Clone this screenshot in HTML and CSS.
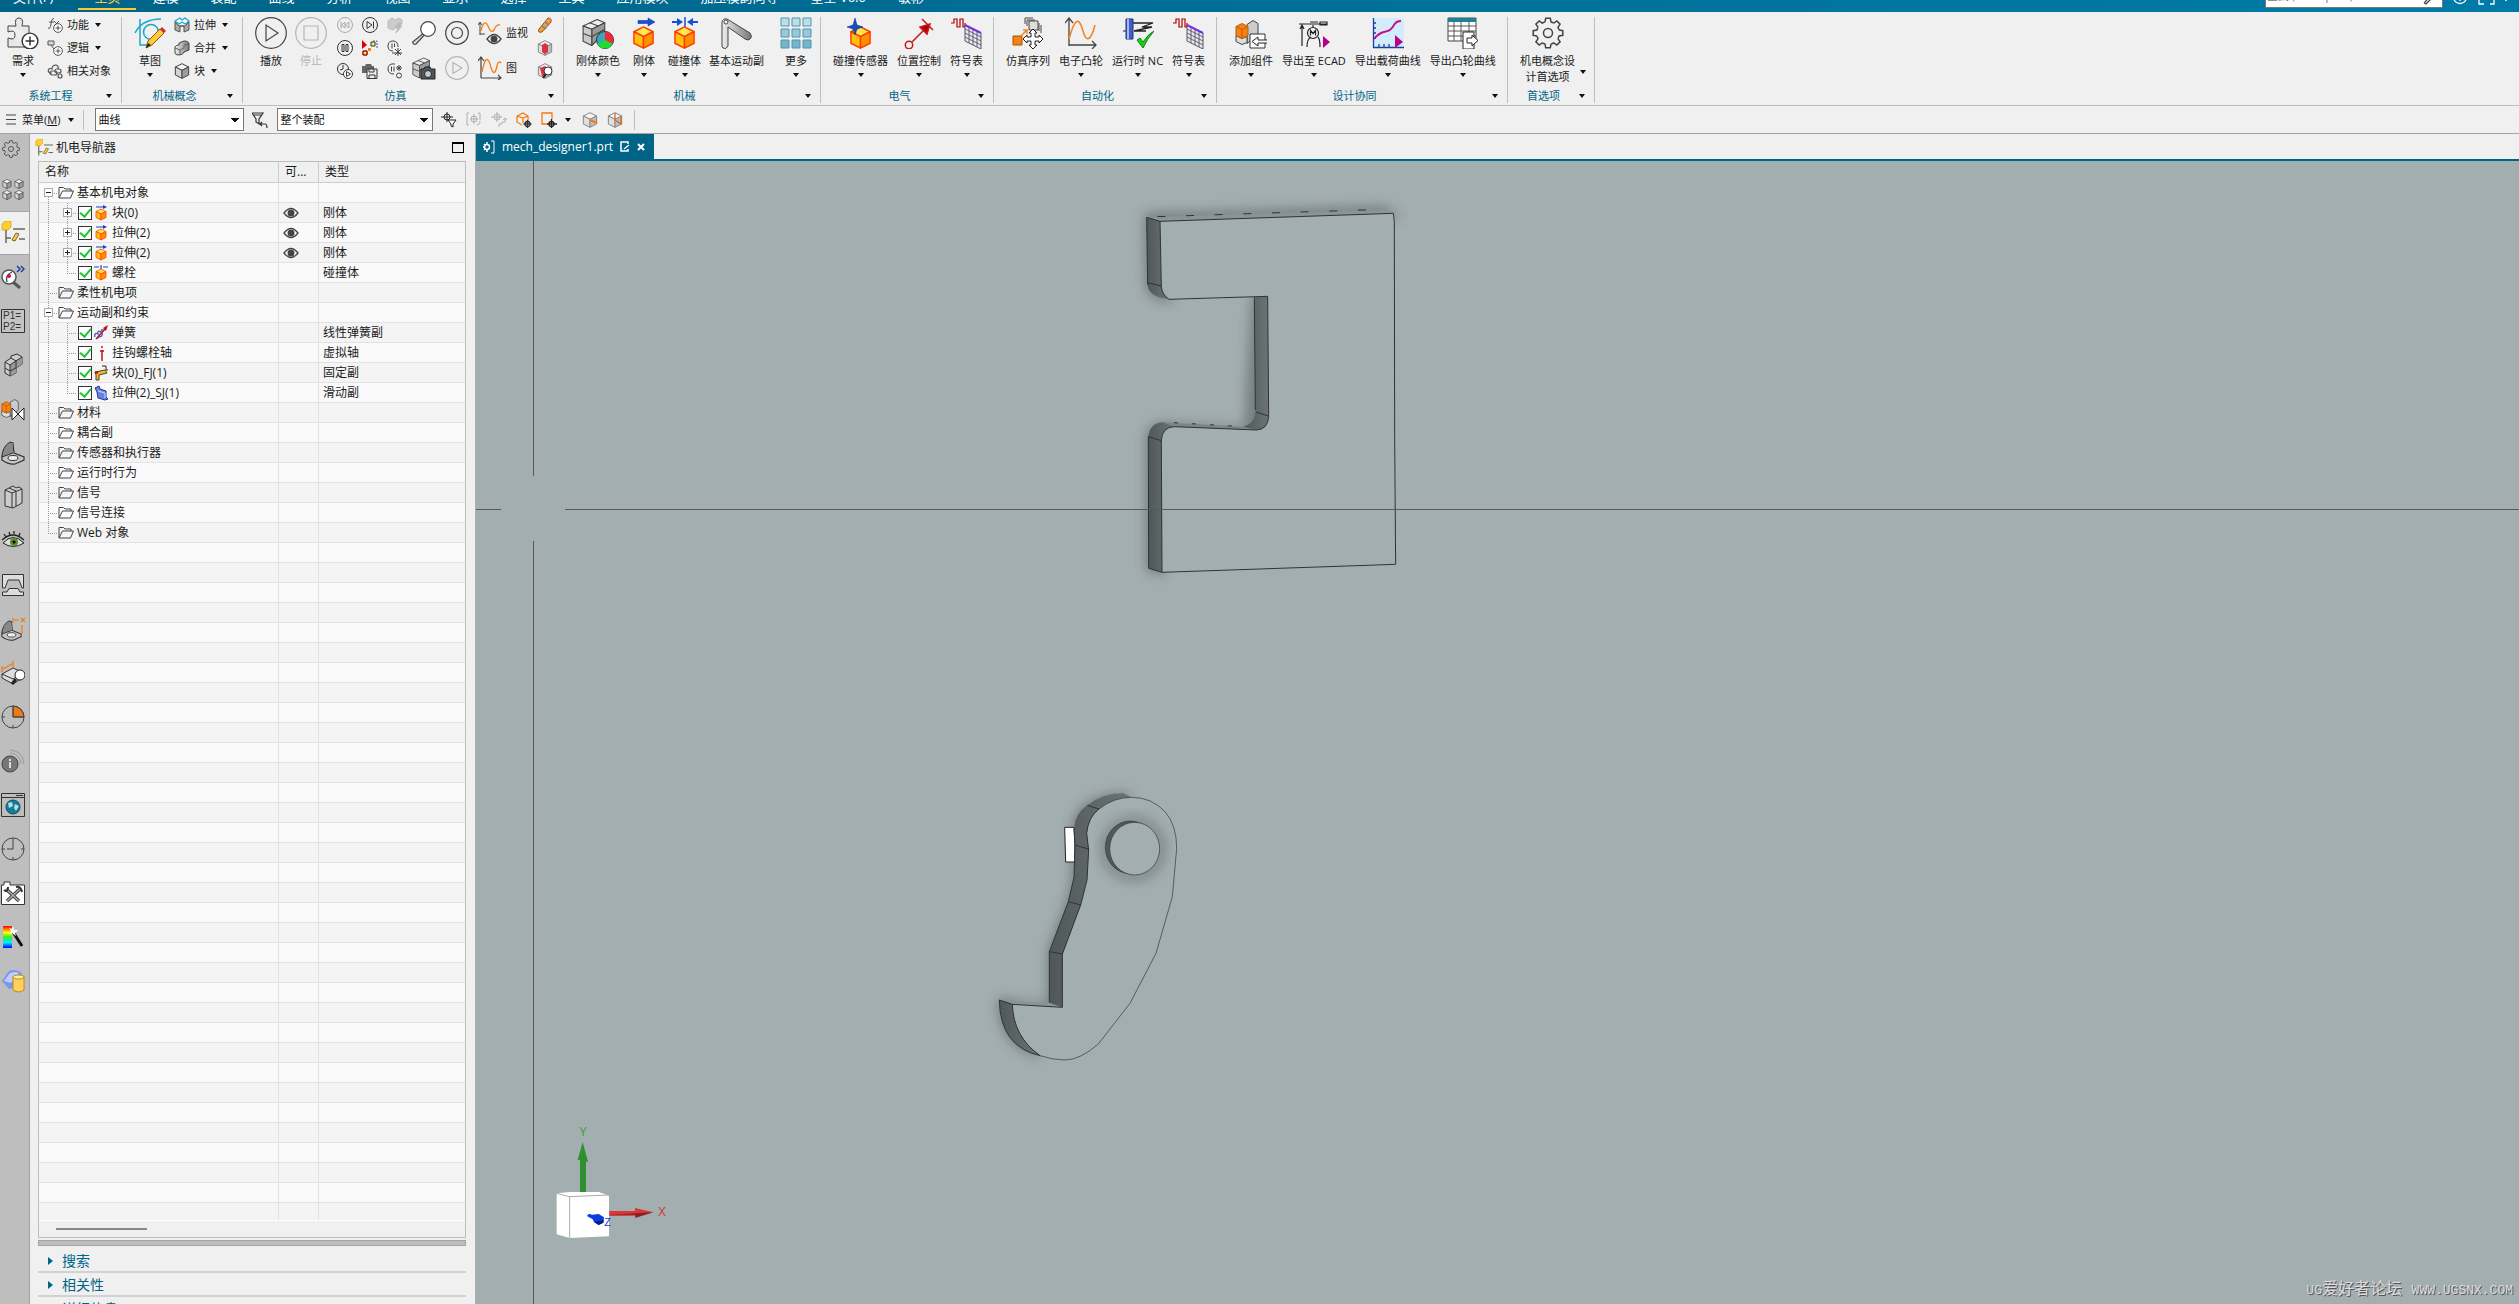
FILE: index.html
```
<!DOCTYPE html>
<html lang="zh-CN">
<head>
  <meta charset="UTF-8">
  <meta name="viewport" content="width=device-width, initial-scale=1.0">
  <title>mech_designer1.prt</title>
  <link rel="stylesheet" href="styles.css">
</head>
<body>
  <!-- shared icons -->
  <svg class="defs" width="0" height="0">
    <defs>
      <linearGradient id="metal" x1="0" x2="1"><stop offset="0" stop-color="#eee"/><stop offset="1" stop-color="#777"/></linearGradient>
      <linearGradient id="wall" x1="0" x2="1"><stop offset="0" stop-color="#4f5759"/><stop offset="1" stop-color="#6c7476"/></linearGradient>
      <linearGradient id="rainbow" x1="0" x2="0" y1="0" y2="1"><stop offset="0" stop-color="#f00"/><stop offset=".3" stop-color="#ff0"/><stop offset=".5" stop-color="#3e2"/><stop offset=".75" stop-color="#0ef"/><stop offset="1" stop-color="#00f"/></linearGradient>
      <filter id="soft" x="-20%" y="-20%" width="140%" height="140%"><feGaussianBlur stdDeviation="18"/></filter>
    </defs>
    <symbol id="cube-o" viewBox="0 0 24 24"><g stroke="#ff3c00" stroke-width="1.5" stroke-linejoin="round"><path d="M12 1 22 6 12 11 2 6z" fill="#ffe850"/><path d="M2 6 12 11V23L2 18z" fill="#ffc010"/><path d="M22 6 12 11V23L22 18z" fill="#ff9000"/></g></symbol>
    <symbol id="cube-g" viewBox="0 0 24 24"><g stroke="#444" stroke-width="1.5" stroke-linejoin="round"><path d="M12 1 22 6 12 11 2 6z" fill="#f4f4f4"/><path d="M2 6 12 11V23L2 18z" fill="#d4d4d4"/><path d="M22 6 12 11V23L22 18z" fill="#9c9c9c"/></g></symbol>
    <symbol id="stack" viewBox="0 0 24 24"><g stroke="#444" stroke-linejoin="round"><path d="M1 6 14 0 21 3 9 9z" fill="#eee"/><path d="M9 9 21 3V12L9 24z" fill="#999"/><path d="M1 6 9 9V24L1 20z" fill="#ccc"/><path d="M1 13 9 16 21 9M7 3 15 6" fill="none"/></g></symbol>
    <symbol id="folder" viewBox="0 0 16 13"><path d="M1 12V1.500H5.500L7 3H13V5M1 12 4.500 5H15.500L12.500 12z" fill="none" stroke="#444"/></symbol>
    <symbol id="eye" viewBox="0 0 16 12"><path d="M1 6Q8-3 15 6Q8 15 1 6z" fill="#fff" stroke="#444" stroke-width="1.300"/><circle cx="8" cy="6" r="3.500" fill="#444"/></symbol>
    <symbol id="gear" viewBox="0 0 32 32"><g fill="none" stroke="#444" stroke-width="1.500"><g id="t1"><path id="t0" d="M13 4.900 13.700 1.200H18.300L19 4.900 21.800 6"/><use href="#t0" transform="rotate(45 16 16)"/><use href="#t0" transform="rotate(90 16 16)"/><use href="#t0" transform="rotate(135 16 16)"/></g><use href="#t1" transform="rotate(180 16 16)"/><circle cx="16" cy="16" r="4.500"/></g></symbol>
    <symbol id="plus" viewBox="0 0 16 16"><circle cx="8" cy="8" r="7" fill="#fff" stroke="#333" stroke-width="1.300"/><path d="M8 4V12M4 8H12" stroke="#333" stroke-width="1.300"/></symbol>
    <symbol id="rigid" viewBox="0 0 14 16"><path d="M2 2H10" stroke="#1840c8"/><path d="M9 0 13 2 9 4z" fill="#1840c8"/><use href="#cube-o" x="1" y="3" width="12" height="13"/></symbol>
    <symbol id="navicon" viewBox="0 0 24 24"><path d="M5 8V22M5 17H10M12 8H24M18 18H24" fill="none" stroke="#666" stroke-width="1.500"/><path d="M1 3 4 0H10V6L7 9H1z" fill="#ffcf2e" stroke="#c89000" stroke-width=".600"/><path d="M11 19 15 12 18 13 14 20z" fill="#f5c860" stroke="#8a6410"/></symbol>
    <symbol id="symtab" viewBox="0 0 32 32"><path d="M0 6H3V2H6V10H9V2H12V10H14V6" fill="none" stroke="#b00000" stroke-width="1.200"/><path d="M14 8 30 16V32L14 24z" fill="#e8e8ee" stroke="#556"/><path d="M14 12 30 20M14 16 30 24M14 20 30 28M18 10V26M22 12V28M26 14V30" stroke="#556" stroke-width=".900"/><path d="M14 8 30 16" stroke="#7a30e0" stroke-width="2"/></symbol>
    <symbol id="bracket" viewBox="0 0 24 24"><path d="M1 16Q2 6 12 2L13 12 23 16V19L14 23Q8 24 1 19z" fill="#c4c4c4" stroke="#333" stroke-width="1.200"/><path d="M12 2 9 1Q1 6 1 16L12 12" fill="#888" stroke="#333"/><ellipse cx="12" cy="17" rx="5" ry="2.500" fill="#eee" stroke="#333"/></symbol>
    <symbol id="comp" viewBox="0 0 24 24"><path d="M12 4 18 0 23 3V14L12 23z" fill="#ccc" stroke="#444"/><path d="M1 15 7 18 12 16V22L7 24 1 21z" fill="#ddd" stroke="#444"/><path d="M1 6 7 3 13 6V15L7 18 1 15z" fill="#f58216" stroke="#c05600"/><path d="M1 6 7 9 13 6M7 9V18" fill="none" stroke="#c05600"/></symbol>
  </svg>

  <div class="app">
    <header class="menubar">
      <nav class="menus">
        <a href="#" class="file">文件(F)</a>
        <a href="#" class="active">主页</a>
        <a href="#">建模</a>
        <a href="#">装配</a>
        <a href="#">曲线</a>
        <a href="#">分析</a>
        <a href="#">视图</a>
        <a href="#">显示</a>
        <a href="#">选择</a>
        <a href="#">工具</a>
        <a href="#">应用模块</a>
        <a href="#">加压模韵向导</a>
        <a href="#">星空 V6.0</a>
        <a href="#">敏彬</a>
      </nav>
      <div class="finder">
        <input type="text" aria-label="查找命令" placeholder="查找 (Ctrl+Space)">
        <svg width="76" height="12" viewBox="0 0 76 12" fill="none" stroke="#fff" stroke-width="1.300"><path d="M-19 3 -16 0M-19 3 -17 4 -12-1" stroke="#444"/><circle cx="17" cy="-3" r="6.500"/><path d="M17-4V1M36 0V4H41M47 4H51V0"/><path d="M62 0H64"/></svg>
      </div>
    </header>

    <div class="ribbon">
      <section class="group g-system">
        <div class="tools">
          <button class="big"><svg class="i32" viewBox="0 0 32 32"><path d="M1 9H9Q7 1 12 1Q17 1 15 9H22V16M1 9V15Q8 12 8 18Q8 24 1 21V30H18" fill="#e8e8e8" stroke="#444"/><use href="#plus" x="14" y="15" width="18" height="18"/></svg>需求<i class="arrow"></i></button>
          <div class="stack">
            <button class="small"><svg class="i16" viewBox="0 0 16 16"><path d="M1 11Q3 13 4 7Q5 0 7 2M2 5H7M7 4 12 9M12 4 7 9" fill="none" stroke="#555"/><use href="#plus" x="6" y="6" width="10" height="10"/></svg>功能<i class="arrow"></i></button>
            <button class="small"><svg class="i16" viewBox="0 0 16 16"><path d="M1 1H7V5H1zM4 5 7 9" fill="#ddd" stroke="#555"/><use href="#plus" x="6" y="6" width="10" height="10"/></svg>逻辑<i class="arrow"></i></button>
            <button class="small"><svg class="i16" viewBox="0 0 16 16" fill="none" stroke="#555" stroke-width="1.200"><path d="M5 10H3Q0 8 2 6Q3 5 5 6Q5 2 9 2Q12 3 11 6"/><rect x="3" y="8" width="7" height="4" rx="2"/><rect x="8" y="6" width="6" height="4" rx="2"/><circle cx="13" cy="13" r="2"/></svg>相关对象</button>
          </div>
        </div>
        <h2>系统工程<i class="arrow"></i></h2>
      </section>

      <section class="group g-concept">
        <div class="tools">
          <button class="big"><svg class="i32" viewBox="0 0 32 32"><g fill="none" stroke="#18a8cc" stroke-width="1.500"><path d="M6 2V28H17M1 16Q8 2 27 2"/><circle cx="17" cy="15" r="7.500"/></g><path d="M12 31 14 24 26 12 30 16 18 28z" fill="#ffc83c" stroke="#8a5a00"/><path d="M26 12 28 10 32 14 30 16z" fill="#d03030"/><path d="M12 31 14 26 17 28z" fill="#222"/></svg>草图<i class="arrow"></i></button>
          <div class="stack">
            <button class="small"><svg class="i16" viewBox="0 0 16 16"><path d="M1 5V13L6 15V9H10V15L15 13V5L11 9H5z" fill="#aaa" stroke="#555"/><path d="M1 4 6 1 8 3 11 1 15 4 11 7 8 5 5 7z" fill="#fff" stroke="#18a8cc" stroke-width="1.300"/></svg>拉伸<i class="arrow"></i></button>
            <button class="small"><svg class="i16" viewBox="0 0 16 16"><path d="M1 7Q2 5 5 5V3L10 1Q15 1 15 4V10L10 12Q9 15 5 15Q1 15 1 13z" fill="url(#metal)" stroke="#444"/><path d="M1 8 6 10 10 8 10 5 15 4M6 10V15" fill="none" stroke="#666"/></svg>合并<i class="arrow"></i></button>
            <button class="small"><svg class="i16"><use href="#cube-g"/></svg>块<i class="arrow"></i></button>
          </div>
        </div>
        <h2>机械概念<i class="arrow"></i></h2>
      </section>

      <section class="group g-sim">
        <div class="tools">
          <div class="pair">
            <button class="big"><svg class="i32" viewBox="0 0 32 32" fill="none" stroke="#444" stroke-width="1.200"><circle cx="16" cy="16" r="15.300"/><path d="M11 8V24L23 16z"/></svg>播放</button>
            <button class="big off" disabled><svg class="i32" viewBox="0 0 32 32" fill="none" stroke="#b4b4b4" stroke-width="1.200"><circle cx="16" cy="16" r="15.300"/><path d="M9 9H23V23H9z"/></svg>停止</button>
          </div>
          <div class="stack">
            <button class="icon" aria-label="回到起点"><svg class="i16" viewBox="0 0 16 16" fill="none" stroke="#aaa"><circle cx="8" cy="8" r="7.500"/><path d="M4 4.500V11.500M8 5V11L4.500 8zM12 5V11L8.500 8z"/></svg></button>
            <button class="icon" aria-label="暂停"><svg class="i16" viewBox="0 0 16 16" fill="none" stroke="#333"><circle cx="8" cy="8" r="7.500"/><path d="M5 4.500H7V11.500H5zM9 4.500H11V11.500H9z"/></svg></button>
            <button class="icon" aria-label="定时播放"><svg class="i16" viewBox="0 0 16 16" fill="none" stroke="#333"><circle cx="6" cy="6" r="5.500"/><path d="M6 2V6L3 7"/><circle cx="11" cy="11" r="4.500" fill="#fff"/><path d="M9.500 8.500V13.500L13.500 11z"/></svg></button>
          </div>
          <div class="stack">
            <button class="icon" aria-label="下一步"><svg class="i16" viewBox="0 0 16 16" fill="none" stroke="#333"><circle cx="8" cy="8" r="7.500"/><path d="M5 4.500V11.500L10 8zM11.500 4.500V11.500"/></svg></button>
            <button class="icon" aria-label="步进"><svg class="i16" viewBox="0 0 16 16"><path d="M0 0V9L5 5z" fill="#e00000"/><path d="M9 2H13V6H9zM1 11H5V15H1z" fill="#fff34a" stroke="#333"/><path d="M1 11H5V15H1z" fill="none" stroke="#e00000"/><path d="M6 8H9V11H6z" fill="#f58216"/><path d="M11 1H15V9" fill="none" stroke="#3060d0" stroke-dasharray="2 1"/></svg></button>
            <button class="icon" aria-label="保存快照"><svg class="i16" viewBox="0 0 16 16"><path d="M0 3H3L4 1H9L10 3H12V10H0z" fill="#666"/><path d="M5 6H15V15.500H5z" fill="#eee" stroke="#333"/><path d="M7 6V9H12V6M7 15V12H13V15" fill="none" stroke="#333"/></svg></button>
          </div>
          <div class="stack">
            <button class="icon" aria-label="快照"><svg class="i16" viewBox="0 0 16 16" fill="#ccc" stroke="#bbb"><path d="M1 4 5 1 8 3 12 1 15 3V7L11 9 6 13 1 11z"/><path d="M11 6 8 11H11L9 16L15 9H12L14 6z" fill="#bbb"/></svg></button>
            <button class="icon" aria-label="暂停条件"><svg class="i16" viewBox="0 0 16 16" fill="none" stroke="#444"><path d="M11 7Q11 1 6 1Q1 1 1 6Q1 11 6 11M5 3.500V8.500M7.500 3.500V7M5 13H15M11 8V16M8 9 14 15M14 9 8 15"/></svg></button>
            <button class="icon" aria-label="暂停设置"><svg class="i16" viewBox="0 0 16 16" fill="none" stroke="#444"><path d="M8 1Q1 0 1 6Q1 11 7 11M4.500 3.500V8.500M7 3.500V8.500M9 5H15M12 2V8M10 3 14 7M14 3 10 7"/><circle cx="12" cy="12.500" r="2.500"/></svg></button>
          </div>
          <div class="stack wide">
            <button class="icon" aria-label="检查"><svg class="i24" viewBox="0 0 24 24" fill="#fff" stroke="#444" stroke-width="1.200"><circle cx="16" cy="8" r="7.300"/><path d="M10.500 13 12 14.500 4 23Q2 24 1 22Q0 21 2 20z" fill="#ddd"/></svg></button>
            <button class="icon" aria-label="捕捉布置"><svg class="i24" viewBox="0 0 24 24"><use href="#stack" width="20" height="24"/><path d="M9 13H12L13 11H18L19 13H23V23H9z" fill="#555" stroke="#222"/><circle cx="16" cy="18" r="3.500" fill="#bcd" stroke="#222"/></svg></button>
          </div>
          <div class="stack wide">
            <button class="icon" aria-label="录制"><svg class="i24" viewBox="0 0 24 24" fill="none" stroke="#444" stroke-width="1.200"><circle cx="12" cy="12" r="11.300"/><circle cx="12" cy="12" r="5.500"/></svg></button>
            <button class="icon" aria-label="回放"><svg class="i24" viewBox="0 0 24 24" fill="none" stroke="#b4b4b4" stroke-width="1.200"><circle cx="12" cy="12" r="11.300"/><path d="M8 6.500V17.500L17 12z"/></svg></button>
          </div>
          <div class="stack wide">
            <button class="small"><svg class="i24" viewBox="0 0 24 24"><path d="M2 14V2M0 4 2 1 4 4M2 13H7" fill="none" stroke="#444"/><path d="M3 10Q6-3 10 5Q13 13 16 9Q18 3 22 4" fill="none" stroke="#f58216" stroke-width="1.300"/><use href="#eye" x="8" y="12" width="16" height="12"/></svg>监视</button>
            <button class="small"><svg class="i24" viewBox="0 0 24 24"><path d="M3 22V2M0 5 3 1 6 5M3 22H23M20 19 23 22 20 24" fill="none" stroke="#444" stroke-width="1.200"/><path d="M4 16Q8-4 12 8Q16 24 19 10Q20 4 23 7" fill="none" stroke="#f58216" stroke-width="1.400"/></svg>图</button>
          </div>
          <div class="stack">
            <button class="icon" aria-label="材料"><svg class="i16" viewBox="0 0 16 16"><path d="M2 12 11 1Q15 1 14 5L5 15Q0 16 2 12z" fill="#f0a040" stroke="#a05010"/><path d="M5 9 9 12M8 5 12 8" stroke="#888" stroke-width="2"/></svg></button>
            <button class="icon" aria-label="干涉"><svg class="i16" viewBox="0 0 16 16"><use href="#cube-g" opacity=".6"/><path d="M5 5 8 3 11 5V12L8 14 5 12z" fill="#d83440"/></svg></button>
            <button class="icon" aria-label="干涉检查"><svg class="i16" viewBox="0 0 16 16"><use href="#cube-g" opacity=".6"/><path d="M3 5 8 3 10 5 8 13H5z" fill="#d83440"/><circle cx="11" cy="8" r="4" fill="#fff" stroke="#333"/><path d="M9 11 6 15" stroke="#222" stroke-width="2"/></svg></button>
          </div>
        </div>
        <h2>仿真<i class="arrow"></i></h2>
      </section>

      <section class="group g-mech">
        <div class="tools">
          <button class="big"><svg class="i32" viewBox="0 0 32 32"><use href="#stack" width="26" height="31"/><circle cx="23" cy="23" r="8.500" fill="#35a8bc" stroke="#333"/><path d="M23 23V14.500A8.500 8.500 0 0 1 30.500 27z" fill="#f02838"/><path d="M23 23 30.500 27A8.500 8.500 0 0 1 15.500 27z" fill="#20dc30"/></svg>刚体颜色<i class="arrow"></i></button>
          <button class="big"><svg class="i32" viewBox="0 0 32 32"><path d="M10 3.500H20V1L27 5 20 9V6.500H10z" fill="#1450d8" stroke="#0a2a90" stroke-width=".500"/><use href="#cube-o" x="3" y="9" width="25" height="23"/></svg>刚体<i class="arrow"></i></button>
          <button class="big"><svg class="i32" viewBox="0 0 32 32"><path d="M3 4H8V1L14 5 8 9V6H3zM29 4H24V1L18 5 24 9V6H29z" fill="#1450d8"/><path d="M16 0V10" stroke="#1450d8" stroke-width="1.500"/><use href="#cube-o" x="3" y="9" width="25" height="23"/></svg>碰撞体<i class="arrow"></i></button>
          <button class="big"><svg class="i32" viewBox="0 0 32 32"><path d="M1 5Q2 1 6 2L29 16Q32 20 29 22Q27 24 24 22L7 10V29Q5 33 2 31Q1 30 1 28z" fill="url(#metal)" stroke="#444"/><circle cx="5" cy="5" r="2" fill="#fff" stroke="#444"/></svg>基本运动副<i class="arrow"></i></button>
          <button class="big more"><svg class="i32" viewBox="0 0 32 32" stroke="#4898b0"><path d="M1 1H9V9H1zM12 1H20V9H12zM23 1H31V9H23z" fill="#c0dce4"/><path d="M1 12H9V20H1zM12 12H20V20H12zM23 12H31V20H23z" fill="#9cc8d6"/><path d="M1 23H9V31H1zM12 23H20V31H12zM23 23H31V31H23z" fill="#78b4c8"/></svg>更多<i class="arrow"></i></button>
        </div>
        <h2>机械<i class="arrow"></i></h2>
      </section>

      <section class="group g-elec">
        <div class="tools">
          <button class="big"><svg class="i32" viewBox="0 0 32 32"><use href="#cube-o" x="3" y="9" width="25" height="23"/><path d="M10 1 12 8 18 10 12 12 10 18 8 12 2 10 8 8z" fill="#1450c0" stroke="#0a2a80" stroke-width=".500"/></svg>碰撞传感器<i class="arrow"></i></button>
          <button class="big"><svg class="i32" viewBox="0 0 32 32" fill="none" stroke="#c81818" stroke-width="1.500"><circle cx="6" cy="28" r="3.700"/><path d="M9 25 24 10M19 2 30 13"/><path d="M27 7 17 10 24 17z" fill="#b00000"/></svg>位置控制<i class="arrow"></i></button>
          <button class="big"><svg class="i32"><use href="#symtab"/></svg>符号表<i class="arrow"></i></button>
        </div>
        <h2>电气<i class="arrow"></i></h2>
      </section>

      <section class="group g-auto">
        <div class="tools">
          <button class="big"><svg class="i32" viewBox="0 0 32 32"><path d="M1 19H10V28H1z" fill="#f58216" stroke="#a85000"/><path d="M9 19 14 14M11 13H15V17" fill="none" stroke="#f58216" stroke-width="1.500"/><path d="M13 7V1H21M15 9V3H23" fill="none" stroke="#444"/><path d="M17 4H26V13H17z" fill="#ddd" stroke="#444"/><path d="M29 8V16M27 6V14" stroke="#444"/><path d="M21 12 25 16H23V20H27V18L31 22 27 26V24H23V28H25L21 32 17 28H19V24H15V26L11 22 15 18V20H19V16H17z" fill="#fff" stroke="#222"/></svg>仿真序列</button>
          <button class="big"><svg class="i32" viewBox="0 0 32 32"><path d="M4 29V2M0 6 4 1 8 6M4 28H31M27 24 31 28 27 32" fill="none" stroke="#444" stroke-width="1.300"/><path d="M4 22C10 0 14 0 18 14C21 26 26 24 30 8" fill="none" stroke="#f58216" stroke-width="1.500"/></svg>电子凸轮<i class="arrow"></i></button>
          <button class="big"><svg class="i32" viewBox="0 0 32 32"><path d="M5 6H31L20 10H30L12 14H24" fill="none" stroke="#222" stroke-width="1.300"/><path d="M1 14H8" stroke="#222"/><path d="M4 2H11V22H4z" fill="#4060c8" stroke="#203080"/><path d="M6 2V22" stroke="#a8b8f0" stroke-width="2"/><path d="M15 23 18 21 21 25Q26 17 32 14Q25 22 21 31z" fill="#20c820" stroke="#0a8a0a"/></svg>运行时 NC<i class="arrow"></i></button>
          <button class="big"><svg class="i32"><use href="#symtab"/></svg>符号表<i class="arrow"></i></button>
        </div>
        <h2>自动化<i class="arrow"></i></h2>
      </section>

      <section class="group g-design">
        <div class="tools">
          <button class="big"><svg class="i32" viewBox="0 0 32 32"><use href="#comp" width="24" height="31"/><path d="M15 17H30V31H15z" fill="#fff" stroke="#333"/><path d="M32 23H23V20L17 24.500 23 29V26H32" fill="#fff" stroke="#222"/></svg>添加组件<i class="arrow"></i></button>
          <button class="big"><svg class="i32" viewBox="0 0 32 32" fill="none" stroke="#222" stroke-width="1.200"><path d="M1 7H29M4 8V29M2 12 4 8 6 12M22 5H29V8H22zM12 5H20M9 30Q9 22 13 20M20 20Q22 22 22 30M15 8V10"/><circle cx="15" cy="16" r="5.500"/><path d="M12.500 18.500V13.500L15 16.500 17.500 13.500V18.500"/><path d="M25 19V31L32 25z" fill="#b8008c" stroke="none"/></svg>导出至 ECAD<i class="arrow"></i></button>
          <button class="big"><svg class="i32" viewBox="0 0 32 32"><path d="M1 1H32V31H1z" fill="#d4ecfa"/><path d="M1.500 1V30.500H32M1 6H4M1 11H4M1 16H4M1 21H4M7 30V27M12 30V27M17 30V27" fill="none" stroke="#1840a0" stroke-width="1.300"/><path d="M2 22Q7 16 12 15Q19 14 22 8Q24 4 29 4" fill="none" stroke="#c0108c" stroke-width="1.800"/><path d="M23 18V31L31 25z" fill="#b8008c"/></svg>导出载荷曲线<i class="arrow"></i></button>
          <button class="big"><svg class="i32" viewBox="0 0 32 32"><path d="M1 1H29V24H1z" fill="#fff" stroke="#444"/><path d="M1 1H29V5H1z" fill="#208098"/><path d="M1 9H29M1 14H29M1 19H29M7 5V24M14 5V24M22 5V24" stroke="#555"/><path d="M16 15H27V32H16z" fill="#fff" stroke="#222"/><path d="M20 21H25V18L31 23.500 25 29V26H20z" fill="#fff" stroke="#222"/></svg>导出凸轮曲线<i class="arrow"></i></button>
        </div>
        <h2>设计协同<i class="arrow"></i></h2>
      </section>

      <section class="group g-prefs">
        <div class="tools">
          <button class="big"><svg class="i32"><use href="#gear"/></svg>机电概念设<br>计首选项</button>
          <i class="arrow side"></i>
        </div>
        <h2>首选项<i class="arrow"></i></h2>
      </section>
    </div>

    <div class="selectbar">
      <button class="small menu"><svg width="10" height="11" viewBox="0 0 10 11" stroke="#444"><path d="M0 1H10M0 5.500H10M0 10H10"/></svg><span>菜单(<u>M</u>)</span><i class="arrow"></i></button>
      <i class="sep"></i>
      <select class="type" aria-label="类型过滤器"><option>曲线</option></select>
      <button class="icon" aria-label="重置过滤器"><svg class="i16" viewBox="0 0 16 16" fill="none" stroke="#333" stroke-width="1.200"><path d="M0 1H11L7 7V12L4 10V7zM2 3H9M10 10 8 12 10 14M8 12H13Q15 12 15 16"/></svg></button>
      <select class="scope" aria-label="选择范围"><option>整个装配</option></select>
      <div class="filters">
        <button class="icon" aria-label="常规选择"><svg class="i16" viewBox="0 0 16 16" fill="none" stroke="#222"><circle cx="6" cy="5" r="3"/><path d="M6 0V10M0 5H12"/><path d="M7 8H15L12 12V15L10 14V12z" fill="#fff"/></svg></button>
        <button class="icon" aria-label="还原选择"><svg class="i16" viewBox="0 0 16 16" fill="none" stroke="#b0b0b0"><path d="M3 1H1V13H3M12 1H14V8M8 2V12M4 7H12M11 13Q15 12 14 9"/><circle cx="8" cy="7" r="3"/></svg></button>
        <button class="icon" aria-label="路径选择"><svg class="i16" viewBox="0 0 16 16" fill="none" stroke="#b0b0b0"><circle cx="6" cy="5" r="3"/><path d="M6 0V10M0 5H11M8 15V12H11V10H14V7M12 8 14 6 16 8"/></svg></button>
        <button class="icon" aria-label="体选择"><svg class="i16" viewBox="0 0 16 16" fill="none" stroke="#f07c10" stroke-width="1.300"><path d="M1 4 7 1 12 4V9M1 4V10L6 13M1 4 7 6 12 4M7 6V11"/><g stroke="#333"><circle cx="11.500" cy="12" r="2.500"/><path d="M11.500 8V16M7.500 12H15.500"/></g></svg></button>
        <button class="icon" aria-label="矩形选择"><svg class="i16" viewBox="0 0 16 16" fill="none" stroke="#f07c10" stroke-width="1.300"><path d="M6 12H1V1H11V7"/><g stroke="#222"><circle cx="10.500" cy="12" r="2.500"/><path d="M10.500 7V16M6 12H16"/></g></svg></button>
      </div>
      <i class="arrow"></i>
      <div class="filters views">
        <button class="icon" aria-label="截面"><svg class="i16" viewBox="0 0 16 16"><use href="#cube-g" opacity=".6"/><path d="M8 8 15 11" stroke="#f07c10" stroke-width="2"/></svg></button>
        <button class="icon" aria-label="编辑截面"><svg class="i16" viewBox="0 0 16 16"><use href="#cube-g" opacity=".6"/><path d="M8 1V8L14 12V5" fill="none" stroke="#e06820" stroke-width="1.300"/></svg></button>
      </div>
      <i class="sep"></i>
    </div>

    <main class="work">
      <aside class="rail">
        <button class="gearbtn" aria-label="资源条选项"><svg class="i18"><use href="#gear"/></svg></button>
        <button aria-label="装配导航器"><svg class="i24" viewBox="0 0 24 24"><use href="#cube-g" x="1" y="2" width="10" height="10"/><use href="#cube-g" x="13" y="2" width="10" height="10"/><use href="#cube-g" x="1" y="13" width="10" height="10"/><use href="#cube-g" x="13" y="13" width="10" height="10"/></svg></button>
        <button class="on" aria-label="机电导航器"><svg class="i24"><use href="#navicon"/></svg></button>
        <button aria-label="运行时察看器"><svg class="i24" viewBox="0 0 24 24"><circle cx="8" cy="12" r="7" fill="#fff" stroke="#555" stroke-width="1.500"/><path d="M12 17 19 23" stroke="#555" stroke-width="3"/><path d="M6 17Q4 10 11 7" fill="none" stroke="#2040a0" stroke-width="1.300"/><circle cx="8" cy="11" r="2" fill="#e01010"/><path d="M16 1 19 4 16 7M20 1 23 4 20 7" fill="none" stroke="#2040a0" stroke-width="1.500"/></svg></button>
        <button aria-label="运行时表达式"><svg class="i24" viewBox="0 0 24 24"><path d="M.500 .500H23.500V23.500H.500z" fill="#c4c4c4" stroke="#333"/><g class="p-label"><text x="2" y="10">P1=</text><text x="2" y="21">P2=</text></g></svg></button>
        <button aria-label="装配"><svg class="i24" viewBox="-2 0 24 24"><path d="M2 9 8 5V3L14 1 19 4V11L13 15V20L7 23 2 20z" fill="#ccc" stroke="#333"/><path d="M13 7 19 4V11L13 15V20L7 23V12z" fill="#999"/><path d="M2 9 7 12 19 4M7 12V23M2 15 7 18 13 15M8 5 13 8V15" fill="none" stroke="#333"/></svg></button>
        <button aria-label="约束导航器"><svg class="i24" viewBox="0 0 24 24"><use href="#comp" width="18" height="23"/><path d="M11 11V23L17 17zM23 11V23L17 17z" fill="#fff" stroke="#222"/></svg></button>
        <button aria-label="部件导航器"><svg class="i24"><use href="#bracket"/></svg></button>
        <button aria-label="重用库"><svg class="i24" viewBox="0 0 24 24" stroke="#333"><path d="M4 5 12 1 15 3 18 2 21 4V18L12 23 4 21z" fill="#ccc"/><path d="M4 5 11 8V23M11 8 21 4M8 3 15 6V21" fill="none"/></svg></button>
        <button aria-label="视图管理器"><svg class="i24" viewBox="0 0 24 24"><path d="M2 14Q12 3 23 14Q12 21 2 14z" fill="#ddd" stroke="#222"/><circle cx="13" cy="13" r="4" fill="#58902c"/><circle cx="13" cy="13" r="1.500"/><path d="M1 11Q12 1 23 11M5 8 3 5M9 6 8 3M13 5V2M18 7 19 4" fill="none" stroke="#222" stroke-width="1.300"/></svg></button>
        <button aria-label="模具"><svg class="i24" viewBox="0 0 24 24" fill="#ddd" stroke="#333"><path d="M1.500 1.500H22.500V15H21L18 7H7L4 15H1.500zM1.500 22.500V19H6L8 15.500H17L19 19H22.500V22.500z"/></svg></button>
        <button aria-label="PMI 导航器"><svg class="i24" viewBox="0 0 24 24"><use href="#bracket" y="3" width="21" height="21"/><path d="M12 1V6M13 3H18M21 8V17M20 1 24 5M24 1 20 5" stroke="#f07c10" stroke-width="1.200"/></svg></button>
        <button aria-label="检查"><svg class="i24" viewBox="0 0 24 24"><path d="M1 13 12 7 23 12V16L12 23 1 17z" fill="#ddd" stroke="#333"/><path d="M1 13 12 18 18 14" fill="none" stroke="#333"/><path d="M1 5V11M12 0V6M2 8 11 3" stroke="#f07c10" stroke-width="1.300"/><path d="M15 18 11 23" stroke="#222" stroke-width="3"/><circle cx="19" cy="14" r="5" fill="#fff" stroke="#222"/></svg></button>
        <button aria-label="进度"><svg class="i24" viewBox="0 0 24 24" fill="none" stroke="#444"><path d="M12 12V1A11 11 0 0 1 23 12z" fill="#f07c10"/><circle cx="12" cy="12" r="11"/><path d="M12 1V12H23M1 12H4M12 23V20"/></svg></button>
        <button aria-label="信息"><svg class="i24" viewBox="0 0 24 24"><circle cx="9" cy="15" r="8" fill="#777" stroke="#444"/><path d="M9 13V19M9 10V12" stroke="#fff" stroke-width="1.500"/><path d="M9 1Q22 2 23 15M9 4Q19 5 20 15" fill="none" stroke="#999"/></svg></button>
        <button aria-label="浏览器"><svg class="i24" viewBox="0 0 24 24"><path d="M.500 .500H23.500V23.500H.500zM1 4.500H23M15 2.500H22" fill="none" stroke="#333"/><circle cx="12" cy="14" r="7" fill="#187c98" stroke="#0c5060"/><path d="M7 10 11 9 12 13 8 15zM14 11 18 13 15 18 13 15z" fill="#b4e0e8"/></svg></button>
        <button aria-label="历史记录"><svg class="i24" viewBox="0 0 24 24" fill="none" stroke="#444"><circle cx="12" cy="12" r="11"/><path d="M12 1V12H6M12 23V20M20 12H23M1 12H4"/></svg></button>
        <button aria-label="工具"><svg class="i24" viewBox="0 0 24 24"><path d="M.500 4H3V1H9V4H23.500V23.500H.500z" fill="#fff" stroke="#333"/><path d="M5 8 18 20M19 8 6 20" stroke="#444" stroke-width="3.500"/><path d="M5 8 18 20M19 8 6 20" stroke="#aaa" stroke-width="1.500"/><path d="M3 9Q7 12 7 6M15 6Q20 5 21 11" fill="none" stroke="#333" stroke-width="2"/></svg></button>
        <button aria-label="外观"><svg class="i24" viewBox="0 0 24 24"><path d="M2 1H11V23H2z" fill="url(#rainbow)"/><path d="M12 7 21 21" stroke="#111" stroke-width="3"/><path d="M12 1 13 5 17 5 14 8 15 11 11 8 8 9 10 6 8 3 11 4z" fill="#fff"/></svg></button>
        <button aria-label="几何库"><svg class="i24" viewBox="0 0 24 24"><path d="M1 12 8 2Q14-1 21 4L15 18 8 20z" fill="#7896f0"/><path d="M3 12 9 4Q14 2 18 4L10 14z" fill="#c0ccff"/><path d="M12 8V21Q18 25 23 21V8z" fill="#ffd060" stroke="#c08810"/><ellipse cx="17.500" cy="8" rx="5.500" ry="2" fill="#fff0a0" stroke="#c08810"/></svg></button>
      </aside>

      <section class="navigator">
        <div class="nav-title"><svg class="i18"><use href="#navicon"/></svg><h1>机电导航器</h1><button class="max" aria-label="最大化"></button></div>
        <div class="tree">
          <table>
            <colgroup><col class="c-name"><col class="c-vis"><col></colgroup>
            <thead><tr><th>名称</th><th>可...</th><th>类型</th></tr></thead>
            <tbody>
              <tr><td><div class="node"><i class="g first"><button class="exp" aria-label="折叠"></button></i><svg class="fold"><use href="#folder"/></svg>基本机电对象</div></td><td></td><td></td></tr>
              <tr><td><div class="node"><i class="g line"></i><i class="g tee"><button class="exp add" aria-label="展开"></button></i><input type="checkbox" id="n1" checked><svg class="kind"><use href="#rigid"/></svg><label for="n1">块(0)</label></div></td><td><svg class="vis"><use href="#eye"/></svg></td><td>刚体</td></tr>
              <tr><td><div class="node"><i class="g line"></i><i class="g tee"><button class="exp add" aria-label="展开"></button></i><input type="checkbox" id="n2" checked><svg class="kind"><use href="#rigid"/></svg><label for="n2">拉伸(2)</label></div></td><td><svg class="vis"><use href="#eye"/></svg></td><td>刚体</td></tr>
              <tr><td><div class="node"><i class="g line"></i><i class="g tee"><button class="exp add" aria-label="展开"></button></i><input type="checkbox" id="n3" checked><svg class="kind"><use href="#rigid"/></svg><label for="n3">拉伸(2)</label></div></td><td><svg class="vis"><use href="#eye"/></svg></td><td>刚体</td></tr>
              <tr><td><div class="node"><i class="g line"></i><i class="g end"></i><input type="checkbox" id="n4" checked><svg class="kind" viewBox="0 0 14 16"><path d="M0 2H5M9 2H14M7 0V4" stroke="#1840c8" stroke-width="1.200"/><use href="#cube-o" x="1" y="3" width="12" height="13"/></svg><label for="n4">螺栓</label></div></td><td></td><td>碰撞体</td></tr>
              <tr><td><div class="node"><i class="g tee"></i><svg class="fold"><use href="#folder"/></svg>柔性机电项</div></td><td></td><td></td></tr>
              <tr><td><div class="node"><i class="g tee"><button class="exp" aria-label="折叠"></button></i><svg class="fold"><use href="#folder"/></svg>运动副和约束</div></td><td></td><td></td></tr>
              <tr><td><div class="node"><i class="g line"></i><i class="g tee"></i><input type="checkbox" id="n5" checked><svg class="kind" viewBox="0 0 14 16"><path d="M1 12Q0 7 4 9Q3 5 7 7Q7 3 10 6M3 13Q6 13 5 10M6 12Q9 11 8 8" fill="none" stroke="#4858b8" stroke-width="1.300"/><path d="M2 14 12 3" stroke="#b01020" stroke-width="1.300"/><path d="M14 0 9 3 12 6z" fill="#c01020"/></svg><label for="n5">弹簧</label></div></td><td></td><td>线性弹簧副</td></tr>
              <tr><td><div class="node"><i class="g line"></i><i class="g tee"></i><input type="checkbox" id="n6" checked><svg class="kind" viewBox="0 0 14 16"><path d="M8 1V3M8 5V16M6 6H10" stroke="#c81010" stroke-width="1.500"/></svg><label for="n6">挂钩螺栓轴</label></div></td><td></td><td>虚拟轴</td></tr>
              <tr><td><div class="node"><i class="g line"></i><i class="g tee"></i><input type="checkbox" id="n7" checked><svg class="kind" viewBox="0 0 14 16"><path d="M1 7 11 5 13 8 5 10V15H2V10z" fill="#e8b840" stroke="#5a4410"/><path d="M1 7 4 8" stroke="#c01010" stroke-width="2"/><path d="M8 1H12V5H14" fill="none" stroke="#222"/></svg><label for="n7">块(0)_FJ(1)</label></div></td><td></td><td>固定副</td></tr>
              <tr><td><div class="node"><i class="g line"></i><i class="g end"></i><input type="checkbox" id="n8" checked><svg class="kind" viewBox="0 0 14 16"><path d="M1 3 5 1 6 4 12 6V12L14 14 11 15 4 13 3 7z" fill="#6484e0" stroke="#203890"/><path d="M4 6 11 8V13" fill="none" stroke="#d0dcff"/></svg><label for="n8">拉伸(2)_SJ(1)</label></div></td><td></td><td>滑动副</td></tr>
              <tr><td><div class="node"><i class="g tee"></i><svg class="fold"><use href="#folder"/></svg>材料</div></td><td></td><td></td></tr>
              <tr><td><div class="node"><i class="g tee"></i><svg class="fold"><use href="#folder"/></svg>耦合副</div></td><td></td><td></td></tr>
              <tr><td><div class="node"><i class="g tee"></i><svg class="fold"><use href="#folder"/></svg>传感器和执行器</div></td><td></td><td></td></tr>
              <tr><td><div class="node"><i class="g tee"></i><svg class="fold"><use href="#folder"/></svg>运行时行为</div></td><td></td><td></td></tr>
              <tr><td><div class="node"><i class="g tee"></i><svg class="fold"><use href="#folder"/></svg>信号</div></td><td></td><td></td></tr>
              <tr><td><div class="node"><i class="g tee"></i><svg class="fold"><use href="#folder"/></svg>信号连接</div></td><td></td><td></td></tr>
              <tr><td><div class="node"><i class="g end"></i><svg class="fold"><use href="#folder"/></svg>Web 对象</div></td><td></td><td></td></tr>
            </tbody>
          </table>
          <div class="empty"></div>
          <div class="hscroll"><div class="thumb"></div></div>
        </div>
        <div class="splitter"></div>
        <div class="sections">
          <button>搜索</button>
          <button>相关性</button>
          <button>详细信息</button>
        </div>
      </section>

      <section class="view">
        <div class="tabs">
          <div class="tab">
            <svg width="12" height="14" viewBox="0 0 12 14" fill="none" stroke="#fff"><path d="M8 1H11V13H8"/><circle cx="4" cy="7" r="2.500" stroke-width="1.500"/><path d="M4 2V4M4 10V12M0 7H1M1 4 2 5M1 10 2 9" stroke-width="1.500"/></svg>
            <span>mech_designer1.prt</span>
            <svg width="10" height="11" viewBox="0 0 10 11" fill="none" stroke="#fff" stroke-width="1.500"><path d="M8 3V1H1V10H8V8M4 8 9 4"/></svg>
            <button class="close" aria-label="关闭"><svg width="8" height="8" viewBox="0 0 8 8" stroke="#fff" stroke-width="2"><path d="M1 1 7 7M7 1 1 7"/></svg></button>
          </div>
        </div>
        <div class="canvas">
          <svg class="scene">
            <!-- C-shaped block -->
            <svg x="624" y="29" width="330" height="400" viewBox="0 0 990 1200" overflow="visible">
              <g filter="url(#soft)" opacity=".45"><path d="M140 82 180 94 184 290 207 328Q145 320 143 285zM463 322 503 319 506 680Q503 718 470 720L190 705Q150 710 145 740V1135L186 1147V750L222 712 440 718zM140 76 850 56 880 74 180 96z" fill="#3c4446" stroke="#3c4446" stroke-width="16"/></g>
              <path class="face" d="M180 94 880 70 884 95V740L887 1123 186 1147 184 752Q186 712 222 710L470 720Q506 716 506 680L503 319 207 328Q184 318 184 290z"/>
              <path d="M140 82 850 60 880 70 180 94z" fill="#8a9496"/>
              <path d="M190 697 430 710 470 720 222 710z" fill="#7b8486"/>
              <path class="wall" d="M140 82 180 94 184 290Q188 312 207 328 145 320 143 285z"/>
              <path class="wall" d="M463 322 503 319 506 680Q503 718 470 720L430 710Q466 700 466 660z"/>
              <path class="wall" d="M145 740Q150 698 190 697L222 710Q186 712 184 750L186 1147 146 1135z"/>
              <path class="edge" d="M140 82 180 94 880 70M180 94 184 290Q186 314 207 328L503 319 506 680Q503 718 470 720L222 710Q186 712 184 752L186 1147 887 1123 884 740 883 95 880 70M463 322 466 660M145 740 184 752M144 278 184 288M468 666 505 678M145 740 146 1135 186 1147M140 82 143 285"/>
              <path class="edge" d="M172 80 850 58" stroke-dasharray="24 62"/>
              <path class="edge" d="M222 698 430 710" stroke-dasharray="12 42"/>
            </svg>
            <!-- hook -->
            <svg x="484" y="609" width="260" height="310" viewBox="0 0 780 930" overflow="visible">
              <g filter="url(#soft)" opacity=".45" fill="#3c4446" stroke="#3c4446" stroke-width="12"><path d="M342 175Q345 130 382 106 430 68 515 76L417 117Q385 140 380 190L386 240 381 330 362 405 308 552 307 712 118 690Q120 830 240 857 160 800 157 703L268 698V545L325 395 342 322z"/></g>
              <path class="face" d="M157 703 307 712V552L362 405 381 330 386 240 380 190Q385 140 417 117 460 82 515 82 575 82 615 125 650 165 650 235L637 380 588 550 510 700 415 822Q360 870 315 870 280 870 240 857 160 800 157 703z"/>
              <path d="M314 172H342L345 225 344 276H317z" fill="#fff" stroke="#222" stroke-width="3"/>
              <path d="M118 690 268 698 307 712 157 703z" fill="#8a9496"/>
              <path class="wall" d="M342 175Q345 130 382 106 430 68 490 70L515 82Q460 82 417 117 385 140 380 190L386 240 381 330 362 405 308 552 307 712 268 698V545L325 395 342 322 345 225z"/>
              <path class="wall" d="M118 690 157 703Q160 800 240 857 120 830 118 690z"/>
              <path class="edge" d="M118 690 157 703 307 712V552L362 405 381 330 386 240 380 190Q385 140 417 117M382 106 417 117M345 225 385 237M325 395 362 405M268 545 308 552M342 175 345 225 342 322 325 395 268 545V698M118 690Q120 830 240 857M157 703Q160 800 240 857"/>
              <path class="edge thin" d="M417 117Q460 82 515 82 575 82 615 125 650 165 650 235L637 380 588 550 510 700 415 822Q360 870 315 870 280 870 240 857"/>
              <circle cx="520" cy="236" r="86" fill="none" stroke="#3c4446" stroke-width="20" opacity=".5" filter="url(#soft)"/>
              <ellipse cx="511" cy="232" rx="75" ry="79" fill="#50585a" stroke="#2e3436" stroke-width="2"/>
              <ellipse class="face edge" cx="524" cy="236" rx="75" ry="79"/>
            </svg>
            <!-- datum axes -->
            <g class="axis"><path d="M57.500 0V315M57.500 380V2000M0 348.500H25M89 348.500H4000"/></g>
            <!-- view triad -->
            <svg x="44" y="949" width="180" height="150" viewBox="0 0 540 450">
              <path d="M180 250V150H173L188 96 204 155H198V250z" fill="#2e902e"/>
              <path d="M268 303 345 303V294L400 307 346 323V317L268 318z" fill="#d83838"/>
              <path d="M268 314H346V323L400 307z" fill="#8c2020"/>
              <path d="M110 250 150 246H240L267 255V379L149 384 110 373z" fill="#fff"/>
              <path d="M110 250 149 260 267 255M149 260V384M240 246 267 255" fill="none" stroke="#aaa" stroke-width="3"/>
              <path d="M201 318Q204 309 216 314L236 312 252 322 250 338 236 345 222 336 218 328z" fill="#0a3ce0"/>
              <path d="M222 336 252 330 250 338 236 345z" fill="#062080"/>
              <g class="axis-name"><text x="177" y="79" fill="#40a040">Y</text><text x="414" y="317" fill="#d03838">X</text><text class="z" x="253" y="347" fill="#0a3ce0">Z</text></g>
            </svg>
          </svg>
          <p class="watermark"><span>UG</span>爱好者论坛 <span>WWW.UGSNX.COM</span></p>
        </div>
      </section>
    </main>
  </div>
</body>
</html>
```

FILE: styles.css
```
* {
  box-sizing: border-box;
}
body {
  margin: 0;
  background: #f0f0f0;
  color: #1a1a1a;
  font-family: "Open Sans", "Noto Sans CJK SC", sans-serif;
  font-size: 11px;
}
button {
  padding: 0;
  border: none;
  background: none;
  color: inherit;
  font: inherit;
}
h1, h2, p {
  margin: 0;
  font-weight: normal;
}
svg {
  display: block;
  flex: none;
}
.defs {
  position: absolute;
}
.i16 { width: 16px; height: 16px; }
.i18 { width: 18px; height: 18px; }
.i24 { width: 24px; height: 24px; }
.i32 { width: 32px; height: 32px; }
.app {
  display: flex;
  flex-direction: column;
  height: 100vh;
  overflow: hidden;
}
.arrow {
  flex: none;
  width: 0;
  height: 0;
  border: 3px solid transparent;
  border-top: 4px solid #111;
  border-bottom: none;
}

/* menu bar */
.menubar {
  display: flex;
  flex: none;
  justify-content: space-between;
  height: 12px;
  overflow: hidden;
  background: linear-gradient(90deg, #006487, #007ba8);
}
.menus {
  display: flex;
  align-items: flex-end;
}
.menus a {
  padding: 0 16px 4px;
  border-bottom: 2px solid transparent;
  color: #fff;
  font-size: 13px;
  line-height: 18px;
  text-decoration: none;
  white-space: nowrap;
}
.menus .file {
  padding: 0 25px 4px 13px;
}
.menus .active {
  margin-bottom: 2px;
  padding-bottom: 2px;
  border-color: #ffc83c;
  color: #ffc83c;
}
.finder {
  display: flex;
  align-items: flex-end;
}
.finder svg {
  overflow: visible;
}
.finder input {
  width: 178px;
  height: 22px;
  margin-bottom: 4px;
  padding: 0 1px 3px;
  border: 1px solid #777;
  background: #fff;
  font: 11px "Open Sans", "Noto Sans CJK SC", sans-serif;
}

/* ribbon */
.ribbon {
  display: flex;
  flex: none;
  height: 94px;
  border-bottom: 1px solid #bebebe;
}
.group {
  display: flex;
  flex: none;
  flex-direction: column;
  justify-content: space-between;
  margin: 5px 0 2px;
  padding-left: 8px;
  border-right: 1px solid #bebebe;
}
.group h2 {
  display: flex;
  align-items: center;
  margin-left: -8px;
  padding-right: 9px;
  color: #006487;
  font-size: 11px;
  line-height: 14px;
}
.group h2::before {
  content: "";
  margin-right: auto;
}
.group h2 .arrow {
  margin-left: auto;
}
.tools {
  display: flex;
  gap: 1px;
}
.big {
  display: flex;
  flex-direction: column;
  align-items: center;
  min-width: 38px;
  padding: 0 4px;
  line-height: 16px;
  white-space: nowrap;
}
.big svg {
  margin-bottom: 4px;
}
.big .arrow {
  margin-top: 4px;
}
.big.more {
  margin-left: 8px;
}
.off {
  color: #b4b4b4;
}
.stack {
  display: flex;
  flex-direction: column;
  gap: 7px;
}
.stack.wide {
  gap: 11px;
  padding-top: 4px;
}
.small {
  display: flex;
  align-items: center;
  gap: 4px;
  height: 16px;
  line-height: 16px;
  white-space: nowrap;
}
.small .arrow {
  margin-left: 2px;
}
.wide .small {
  height: 24px;
}
.g-system { width: 122px; padding-left: 3px; }
.g-concept { width: 121px; }
.g-sim { width: 321px; }
.g-mech { width: 257px; }
.g-elec { width: 173px; }
.g-auto { width: 223px; }
.g-design { width: 291px; }
.g-prefs { width: 87px; }
.g-system .tools, .g-concept .tools {
  gap: 4px;
}
.g-sim .tools {
  gap: 9px;
}
.g-mech .tools {
  gap: 0;
}
.pair {
  display: flex;
  margin-right: -3px;
}
.side {
  margin-top: 53px;
}

/* selection bar */
.selectbar {
  display: flex;
  flex: none;
  align-items: center;
  height: 28px;
  padding-left: 6px;
  border-bottom: 1px solid #a4a4a4;
}
.menu {
  gap: 6px;
}
.sep {
  width: 1px;
  height: 20px;
  margin: 0 11px 0 9px;
  background: #bebebe;
}
.selectbar select {
  height: 23px;
  padding: 0 2px;
  border: 1px solid #777;
  border-radius: 0;
  appearance: none;
  background: linear-gradient(to top right, transparent 50%, #111 50%) right 8px center / 4px 4px no-repeat,
    linear-gradient(to top left, transparent 50%, #111 50%) right 4px center / 4px 4px no-repeat, #fff;
  color: #111;
  font: inherit;
}
.type {
  width: 149px;
  margin-right: 8px;
}
.scope {
  width: 156px;
  margin: 0 8px 0 9px;
}
.filters {
  display: flex;
  gap: 9px;
  margin-right: 8px;
}
.views {
  margin: 0 2px 0 11px;
}

/* work area */
.work {
  display: flex;
  flex: 1;
  min-height: 0;
}
.rail {
  flex: none;
  width: 30px;
  overflow: hidden;
  border-right: 1px solid #a4a4a4;
  background: #bebebe;
}
.rail button {
  display: flex;
  align-items: center;
  width: 30px;
  height: 44px;
  padding-left: 1px;
}
.rail .gearbtn {
  height: 33px;
  padding: 0 0 4px 2px;
}
.rail .on {
  border: solid #a4a4a4;
  border-width: 1px 0;
  background: #f0f0f0;
}
.p-label {
  font: 10px "Liberation Sans", sans-serif;
  fill: #333;
}
.navigator {
  display: flex;
  flex: none;
  flex-direction: column;
  width: 446px;
  padding: 0 9px 0 8px;
  border-right: 1px solid #b0b0b0;
}
.nav-title {
  display: flex;
  flex: none;
  align-items: center;
  gap: 3px;
  height: 27px;
  margin-left: -3px;
  padding-right: 2px;
}
.nav-title h1 {
  flex: 1;
  font-size: 12px;
  line-height: 20px;
}
.max {
  width: 12px;
  height: 11px;
  border: 1px solid #000;
  border-top-width: 2px;
}
.tree {
  display: flex;
  flex: 1;
  flex-direction: column;
  min-height: 0;
  border: 1px solid #bebebe;
}
.tree table {
  flex: none;
  width: 100%;
  border-spacing: 0;
  table-layout: fixed;
  font-size: 12px;
}
.c-name { width: 240px; }
.c-vis { width: 40px; }
.tree th {
  height: 21px;
  padding: 0 6px;
  border-right: 1px solid #ccc;
  border-bottom: 1px solid #ccc;
  font-weight: normal;
  line-height: 20px;
  text-align: left;
}
.tree td {
  height: 20px;
  padding: 0 0 0 4px;
  border-right: 1px solid #e2e2e2;
  border-bottom: 1px solid #e2e2e2;
  background: #fafafa;
  line-height: 19px;
  white-space: nowrap;
}
.tree tr:nth-child(even) td {
  background: #f4f4f4;
}
.tree td:first-child {
  padding: 0;
}
.tree th:last-child, .tree td:last-child {
  border-right: none;
}
.node {
  display: flex;
  align-items: center;
  height: 19px;
}
.g {
  --dots: repeating-linear-gradient(#999 0 1px, transparent 1px 2px);
  --dash: repeating-linear-gradient(90deg, #999 0 1px, transparent 1px 2px);
  display: flex;
  flex: none;
  align-items: center;
  width: 19px;
  height: 19px;
  padding-left: 5px;
}
.line {
  background: var(--dots) 9px 0 / 1px 19px no-repeat;
}
.tee {
  background: var(--dots) 9px 0 / 1px 19px no-repeat, var(--dash) 9px 10px / 10px 1px no-repeat;
}
.end {
  background: var(--dots) 9px 0 / 1px 10px no-repeat, var(--dash) 9px 10px / 10px 1px no-repeat;
}
.first {
  background: var(--dots) 9px 10px / 1px 9px no-repeat, var(--dash) 9px 10px / 10px 1px no-repeat;
}
.exp {
  width: 9px;
  height: 9px;
  border: 1px solid #aaa;
  background: linear-gradient(#222, #222) center / 5px 1px no-repeat, #fff;
}
.add {
  background: linear-gradient(#222, #222) center / 5px 1px no-repeat,
    linear-gradient(#222, #222) center / 1px 5px no-repeat, #fff;
}
.fold {
  width: 16px;
  height: 13px;
  margin-right: 3px;
}
.kind {
  width: 14px;
  height: 16px;
  margin: 0 4px 0 2px;
}
.vis {
  width: 16px;
  height: 12px;
}
.node input {
  display: flex;
  align-items: center;
  justify-content: center;
  width: 14px;
  height: 14px;
  margin: 0 0 0 1px;
  border: 1px solid #333;
  appearance: none;
  background: #fff;
}
.node input:checked::before {
  content: "";
  width: 5px;
  height: 9px;
  margin-bottom: 3px;
  border: solid #18c830;
  border-width: 0 2px 2px 0;
  transform: rotate(40deg);
}
.empty {
  flex: 1;
  min-height: 0;
  background: linear-gradient(#e2e2e2, #e2e2e2) 239px 0 / 1px 100% no-repeat,
    linear-gradient(#e2e2e2, #e2e2e2) 279px 0 / 1px 100% no-repeat,
    repeating-linear-gradient(#fafafa 0 19px, #e2e2e2 19px 20px, #f4f4f4 20px 39px, #e2e2e2 39px 40px);
}
.hscroll {
  flex: none;
  height: 17px;
  padding: 7px 17px;
  border-top: 1px solid #fff;
}
.thumb {
  width: 91px;
  height: 2px;
  background: #888;
}
.splitter {
  flex: none;
  height: 6px;
  margin-top: 2px;
  border: 1px solid #a4a4a4;
  background: #bebebe;
}
.sections {
  flex: none;
  height: 58px;
  padding-top: 3px;
  overflow: hidden;
}
.sections button {
  display: flex;
  align-items: center;
  gap: 9px;
  width: 100%;
  height: 24px;
  padding: 2px 0 0 10px;
  border-bottom: 2px solid #d2d2d2;
  color: #006487;
  font-size: 14px;
  line-height: 20px;
}
.sections button::before {
  content: "";
  border: 4px solid transparent;
  border-right: none;
  border-left: 5px solid #006487;
}

/* graphics window */
.view {
  display: flex;
  flex: 1;
  flex-direction: column;
  min-width: 0;
}
.tabs {
  flex: none;
  height: 27px;
  border-bottom: 2px solid #006487;
}
.tab {
  display: flex;
  align-items: center;
  gap: 7px;
  width: 178px;
  height: 25px;
  padding-left: 7px;
  background: #006487;
  color: #fff;
  font-size: 12px;
}
.canvas {
  position: relative;
  flex: 1;
  min-height: 0;
  overflow: hidden;
  background: #a3aeb0;
}
.scene {
  width: 100%;
  height: 100%;
}
.face {
  fill: #a3aeb0;
}
.wall {
  fill: url(#wall);
}
.edge {
  stroke: #2e3436;
  stroke-width: 3;
}
path.edge {
  fill: none;
}
.thin, ellipse.edge {
  stroke-width: 2;
}
.axis {
  fill: none;
  stroke: #5c5656;
}
.axis-name {
  font: 36px "Liberation Sans", sans-serif;
}
.axis-name .z {
  font-size: 32px;
}
.watermark {
  position: absolute;
  right: 6px;
  bottom: 2px;
  color: #dcdcdc;
  font: 16px/22px "Liberation Mono", "Noto Sans CJK SC", monospace;
  text-shadow: 1px 1px 0 #555;
}
.watermark span {
  font-size: 13px;
}
```
